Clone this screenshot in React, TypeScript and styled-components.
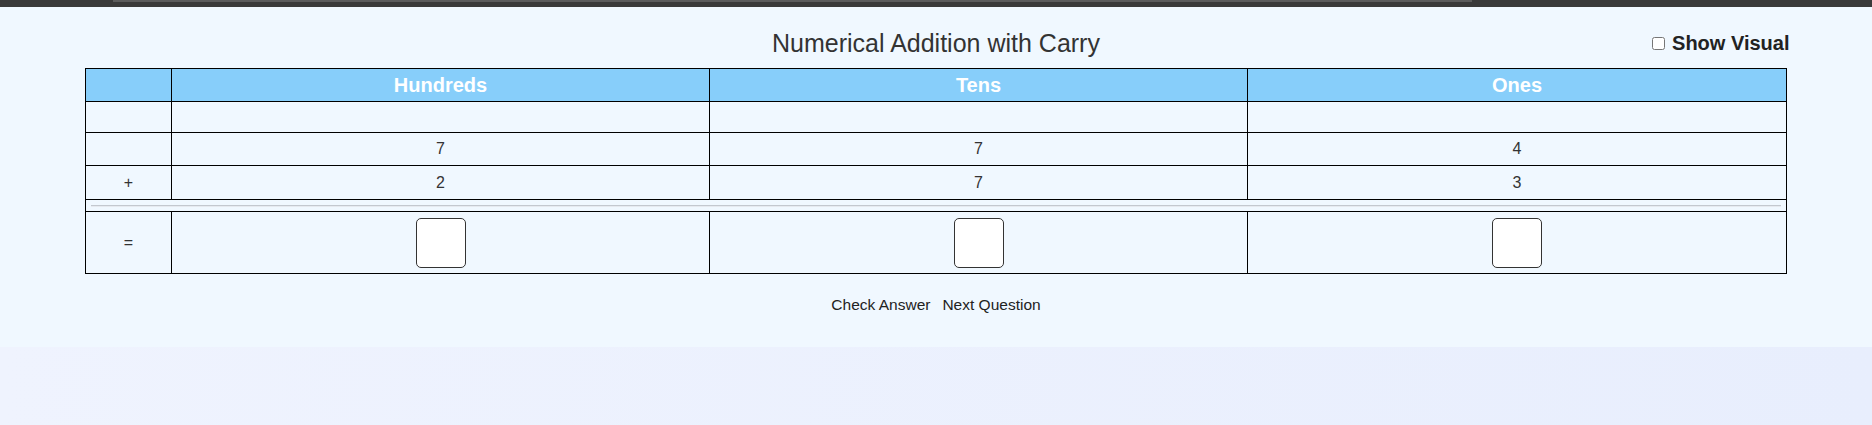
import React, { useState } from 'react';
import styled, { createGlobalStyle } from 'styled-components';

const GlobalStyle = createGlobalStyle`
  html, body {
    margin: 0;
    padding: 0;
  }
  body {
    min-height: 425px;
    background: linear-gradient(to right, #eff3fe, #e8eefd);
    font-family: "Liberation Sans", Arial, sans-serif;
    color: #333;
  }
`;

const places = ['Hundreds', 'Tens', 'Ones'];
const top = [7, 7, 4];
const bottom = [2, 7, 3];

const App = () => {
  const [visual, setVisual] = useState(false);
  const [answers, setAnswers] = useState(['', '', '']);

  const setAnswer = (i: number, v: string) => {
    const next = [...answers];
    next[i] = v.slice(-1);
    setAnswers(next);
  };

  return (
    <>
      <GlobalStyle />
      <TopBar>
        <Strip />
      </TopBar>
      <Page>
        <Header>
          <span />
          <Title>Numerical Addition with Carry</Title>
          <VisualToggle>
            <input
              type="checkbox"
              checked={visual}
              onChange={(e) => setVisual(e.target.checked)}
            />
            Show Visual
          </VisualToggle>
        </Header>
        <Grid>
          <colgroup>
            <col style={{ width: 86 }} />
            <col style={{ width: 538 }} />
            <col style={{ width: 538 }} />
            <col style={{ width: 539 }} />
          </colgroup>
          <tbody>
            <Row $height={33}>
              <HeadCell />
              {places.map((p) => <HeadCell key={p}>{p}</HeadCell>)}
            </Row>
            <Row $height={31}>
              <Cell />
              {places.map((p) => <Cell key={p} />)}
            </Row>
            <Row $height={33}>
              <Cell />
              {top.map((n, i) => <Cell key={i}>{n}</Cell>)}
            </Row>
            <Row $height={34}>
              <Cell>+</Cell>
              {bottom.map((n, i) => <Cell key={i}>{n}</Cell>)}
            </Row>
            <Row $height={12}>
              <RuleCell colSpan={4}>
                <Rule />
              </RuleCell>
            </Row>
            <Row $height={62}>
              <Cell>=</Cell>
              {answers.map((a, i) => (
                <Cell key={i}>
                  <DigitBox
                    value={a}
                    onChange={(e) => setAnswer(i, e.target.value)}
                  />
                </Cell>
              ))}
            </Row>
          </tbody>
        </Grid>
        <Actions>
          <PlainButton>Check Answer</PlainButton>
          <PlainButton>Next Question</PlainButton>
        </Actions>
      </Page>
    </>
  );
};

const TopBar = styled.div`
  display: flex;
  height: 7px;
  padding-left: 113px;
  background: #3a3a3a;
`;

const Strip = styled.div`
  width: 1359px;
  height: 2px;
  background: #5c5c5c;
`;

const Page = styled.div`
  background: #f0f8ff;
  padding: 18px 0 31px;
`;

const Header = styled.div`
  display: grid;
  grid-template-columns: 1fr auto 1fr;
  align-items: center;
  width: 1701px;
  height: 36px;
  margin: 0 auto 7px;
`;

const Title = styled.h2`
  margin: 0;
  font-size: 25px;
  font-weight: normal;
  color: #333;
`;

const VisualToggle = styled.label`
  justify-self: end;
  display: flex;
  align-items: center;
  margin-right: -3px;
  font-size: 20px;
  font-weight: bold;
  color: #222;

  input {
    width: 13px;
    height: 13px;
    margin: 0 7px 0 0;
  }
`;

const Grid = styled.table`
  width: 1701px;
  margin: 0 auto;
  border-collapse: collapse;
  table-layout: fixed;
`;

const Row = styled.tr<{ $height: number }>`
  height: ${(p) => p.$height}px;
`;

const Cell = styled.td`
  border: 1px solid #000;
  padding: 0;
  text-align: center;
  vertical-align: middle;
  font-size: 16px;
  color: #333;
`;

const HeadCell = styled(Cell)`
  background: #87cefa;
  color: #fff;
  font-size: 20px;
  font-weight: bold;
`;

const RuleCell = styled(Cell)`
  padding: 0 5px;
`;

const Rule = styled.div`
  height: 2px;
  background: #c3c8cf;
  border-bottom: 1px solid #e6eaf0;
  box-sizing: border-box;
`;

const DigitBox = styled.input`
  display: block;
  box-sizing: border-box;
  width: 50px;
  height: 50px;
  margin: 0 auto;
  border: 1px solid #333;
  border-radius: 5px;
  background: #fff;
  text-align: center;
  font-size: 20px;
  font-family: inherit;
`;

const Actions = styled.div`
  display: flex;
  justify-content: center;
  margin-top: 20px;
`;

const PlainButton = styled.button`
  background: none;
  border: none;
  padding: 2px 6px;
  font-family: "Liberation Sans", Arial, sans-serif;
  font-size: 15.5px;
  color: #222;
  cursor: pointer;
`;

export default App;
